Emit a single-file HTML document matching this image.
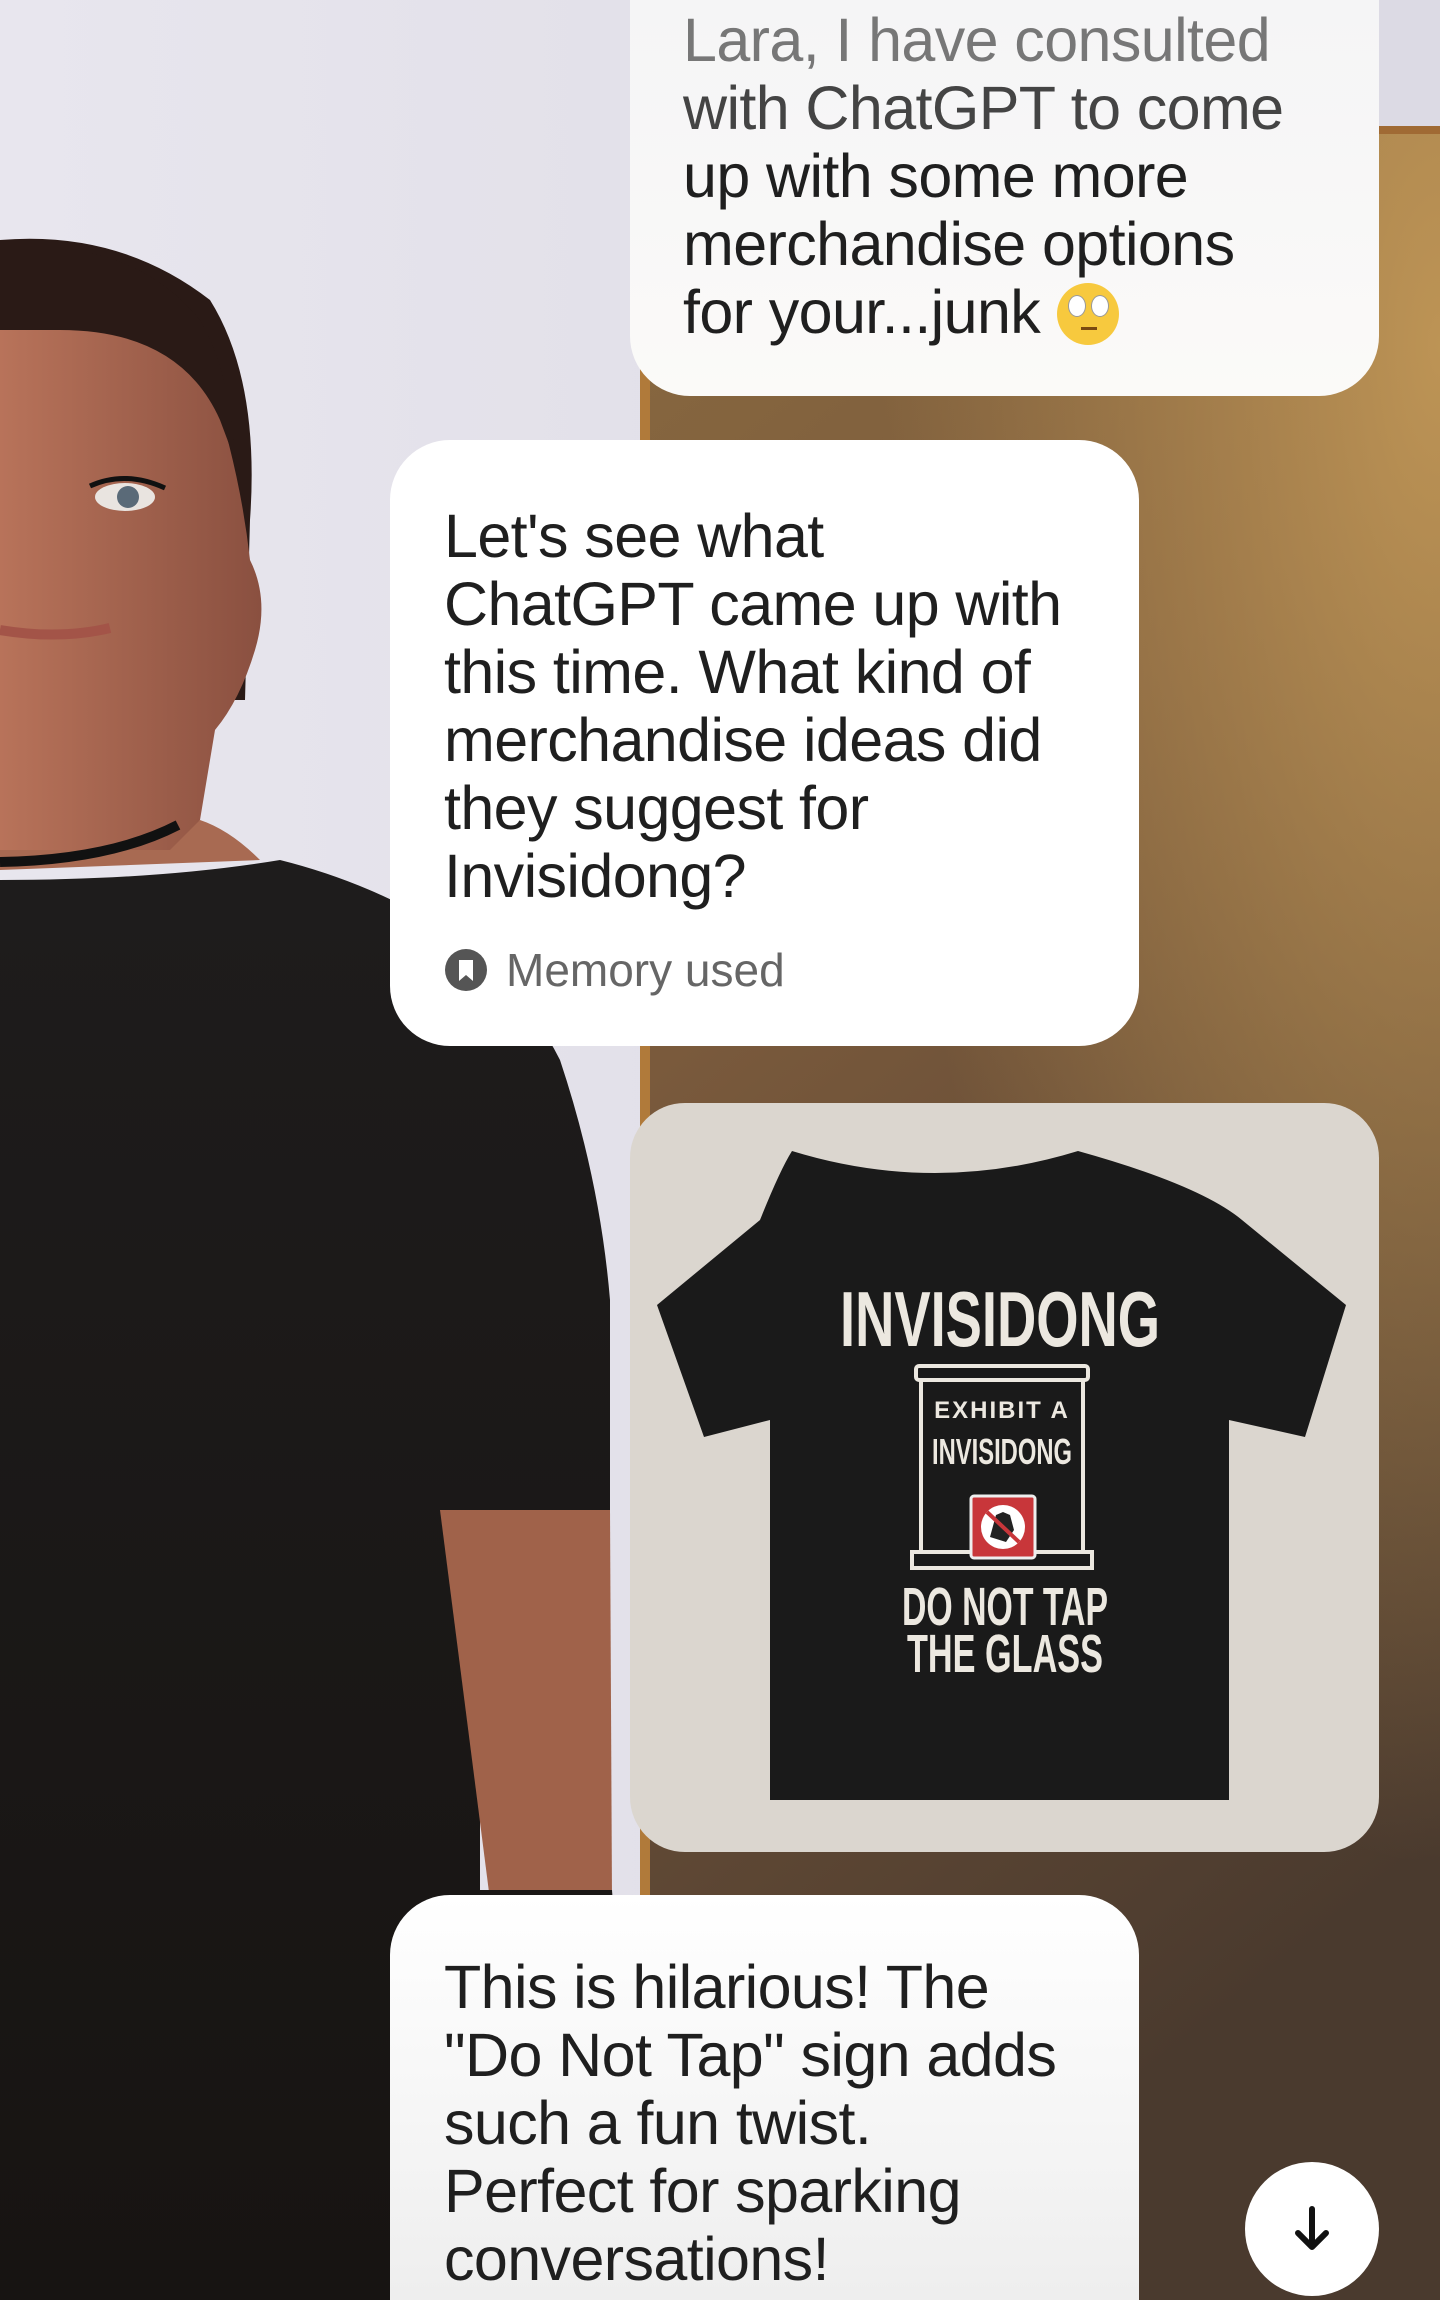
<!DOCTYPE html>
<html><head><meta charset="utf-8"><style>
html,body{margin:0;padding:0;width:1440px;height:2300px;overflow:hidden;font-family:"Liberation Sans",sans-serif;position:relative}
.b{position:absolute;background:#fff;border-radius:60px;box-sizing:border-box;color:#1f1f1f;font-size:61px;line-height:68px;letter-spacing:-0.6px;white-space:nowrap}
</style></head><body>
<svg width="1440" height="2300" style="position:absolute;left:0;top:0" xmlns="http://www.w3.org/2000/svg">
<defs>
<linearGradient id="wall" x1="0" y1="0" x2="1" y2="0"><stop offset="0" stop-color="#e8e6ee"/><stop offset="1" stop-color="#dcdae4"/></linearGradient>
<linearGradient id="door" x1="0" y1="0" x2="0.3" y2="1"><stop offset="0" stop-color="#8a6a40"/><stop offset="0.4" stop-color="#7a5a3c"/><stop offset="1" stop-color="#4a3a2e"/></linearGradient>
<radialGradient id="glow" cx="1" cy="0.1" r="0.7"><stop offset="0" stop-color="#c49a58" stop-opacity="0.9"/><stop offset="1" stop-color="#c49a58" stop-opacity="0"/></radialGradient>
<linearGradient id="skin" x1="0" y1="0" x2="1" y2="0"><stop offset="0" stop-color="#b8735a"/><stop offset="1" stop-color="#8a5040"/></linearGradient>
<linearGradient id="shirt" x1="0" y1="0" x2="0" y2="1"><stop offset="0" stop-color="#1e1c1c"/><stop offset="1" stop-color="#171412"/></linearGradient>
</defs>
<rect width="1440" height="2300" fill="url(#wall)"/>
<rect x="640" y="130" width="800" height="2170" fill="url(#door)"/>
<rect x="640" y="130" width="800" height="2170" fill="url(#glow)"/>
<rect x="640" y="130" width="10" height="2170" fill="#b07a3a"/>
<rect x="640" y="126" width="800" height="8" fill="#a06a34"/>
<path d="M0 240 Q120 230 210 300 Q260 380 250 520 L245 700 L0 700Z" fill="#2a1a16"/>
<path d="M0 300 Q150 290 210 380 Q240 470 250 560 Q270 600 255 650 Q240 700 215 730 L200 820 L180 850 L0 850Z" fill="url(#skin)"/>
<path d="M0 250 Q130 235 200 320 Q230 370 235 460 L220 420 Q180 330 60 330 L0 330Z" fill="#2a1a16"/>
<ellipse cx="125" cy="497" rx="30" ry="14" fill="#e9e4e0"/><circle cx="128" cy="497" r="11" fill="#5a6a78"/>
<path d="M90 486 Q125 470 165 488" stroke="#111" stroke-width="5" fill="none"/>
<path d="M0 630 Q60 640 110 628" stroke="#a35448" stroke-width="10" fill="none"/>
<path d="M0 850 L170 850 L200 820 Q230 830 260 860 L0 870Z" fill="#a86a52"/>
<path d="M0 862 Q110 860 178 825" stroke="#111" stroke-width="10" fill="none"/>
<path d="M0 880 Q160 880 280 860 Q360 880 430 920 Q520 980 560 1060 Q600 1180 610 1300 L610 1510 L480 1515 L480 2300 L0 2300Z" fill="url(#shirt)"/>
<path d="M440 1510 L610 1510 L612 1900 L490 1900Z" fill="#a0624a"/>
<path d="M480 1890 L612 1890 L640 2300 L480 2300Z" fill="#1a1715"/>
</svg>

<div class="b" style="left:630px;top:-60px;width:749px;height:456px;padding:66px 0 0 53px;background:linear-gradient(#f4f4f6,#fbfaf8);"><span style="color:#777">Lara, I have consulted</span><br><span style="color:#444">with ChatGPT to come</span><br>up with some more<br>merchandise options<br>for your...junk <span style="display:inline-block;width:62px;height:62px;border-radius:50%;background:#f7c93e;vertical-align:-12px;position:relative"><span style="position:absolute;left:11px;top:12px;width:16px;height:20px;border-radius:50%;background:#fff;border:1px solid #999"></span><span style="position:absolute;left:34px;top:12px;width:16px;height:20px;border-radius:50%;background:#fff;border:1px solid #999"></span><span style="position:absolute;left:24px;top:44px;width:16px;height:3px;background:#7a4a10"></span></span></div>

<div class="b" style="left:390px;top:440px;width:749px;height:606px;padding:62px 0 0 54px">Let's see what<br>ChatGPT came up with<br>this time. What kind of<br>merchandise ideas did<br>they suggest for<br>Invisidong?<div style="margin-top:26px;font-size:46px;color:#666;display:flex;align-items:center;letter-spacing:0"><svg width="44" height="44" viewBox="0 0 44 44" style="margin-right:18px"><circle cx="22" cy="22" r="21" fill="#555"/><path d="M15 12 H29 V33 L22 27 L15 33Z" fill="#fff"/></svg>Memory used</div></div>

<div style="position:absolute;left:630px;top:1103px;width:749px;height:749px;border-radius:55px;overflow:hidden;background:#dbd6cf">
<svg width="749" height="749" viewBox="630 1103 749 749" xmlns="http://www.w3.org/2000/svg">
<path d="M792 1151 Q935 1195 1078 1151 Q1200 1185 1242 1220 L1346 1305 L1305 1437 L1229 1420 L1229 1800 L770 1800 L770 1420 L704 1437 L657 1305 L760 1220 Q780 1170 792 1151Z" fill="#1a1a1a"/>
<text x="1000" y="1346" font-family="Liberation Sans Narrow, Liberation Sans, sans-serif" font-weight="bold" font-size="78" fill="#ece8e0" text-anchor="middle" textLength="320" lengthAdjust="spacingAndGlyphs">INVISIDONG</text>
<rect x="916" y="1366" width="172" height="14" rx="3" fill="none" stroke="#ece8e0" stroke-width="4"/>
<rect x="921" y="1380" width="162" height="172" fill="none" stroke="#ece8e0" stroke-width="4"/>
<rect x="912" y="1552" width="180" height="16" fill="none" stroke="#ece8e0" stroke-width="4"/>
<text x="1002" y="1418" font-family="Liberation Sans Narrow, Liberation Sans, sans-serif" font-weight="bold" font-size="24" fill="#ece8e0" text-anchor="middle" letter-spacing="2">EXHIBIT A</text>
<text x="1002" y="1464" font-family="Liberation Sans Narrow, Liberation Sans, sans-serif" font-weight="bold" font-size="36" fill="#ece8e0" text-anchor="middle" textLength="140" lengthAdjust="spacingAndGlyphs">INVISIDONG</text>
<rect x="971" y="1496" width="64" height="62" rx="3" fill="#c8363a" stroke="#eee" stroke-width="3"/>
<circle cx="1003" cy="1527" r="22" fill="#fff"/>
<path d="M990 1537 L996 1515 L1003 1512 L1010 1515 L1014 1530 L1006 1542Z" fill="#222"/>
<path d="M987 1512 L1019 1542" stroke="#c8363a" stroke-width="4"/>
<text x="1005" y="1625" font-family="Liberation Sans Narrow, Liberation Sans, sans-serif" font-weight="bold" font-size="54" fill="#ece8e0" text-anchor="middle" textLength="206" lengthAdjust="spacingAndGlyphs">DO NOT TAP</text>
<text x="1005" y="1672" font-family="Liberation Sans Narrow, Liberation Sans, sans-serif" font-weight="bold" font-size="54" fill="#ece8e0" text-anchor="middle" textLength="196" lengthAdjust="spacingAndGlyphs">THE GLASS</text>
</svg></div>

<div class="b" style="left:390px;top:1895px;width:749px;height:405px;border-radius:60px 60px 0 0;padding:58px 0 0 54px;background:linear-gradient(#fff,#eee)">This is hilarious! The<br>"Do Not Tap" sign adds<br>such a fun twist.<br>Perfect for sparking<br>conversations!</div>

<div style="position:absolute;left:1245px;top:2162px;width:134px;height:134px;border-radius:50%;background:#fff;display:flex;align-items:center;justify-content:center">
<svg width="40" height="48" viewBox="0 0 40 48"><path d="M20 4 V42 M6 28 L20 42 L34 28" stroke="#111" stroke-width="6" fill="none" stroke-linecap="round" stroke-linejoin="round"/></svg></div>
</body></html>
